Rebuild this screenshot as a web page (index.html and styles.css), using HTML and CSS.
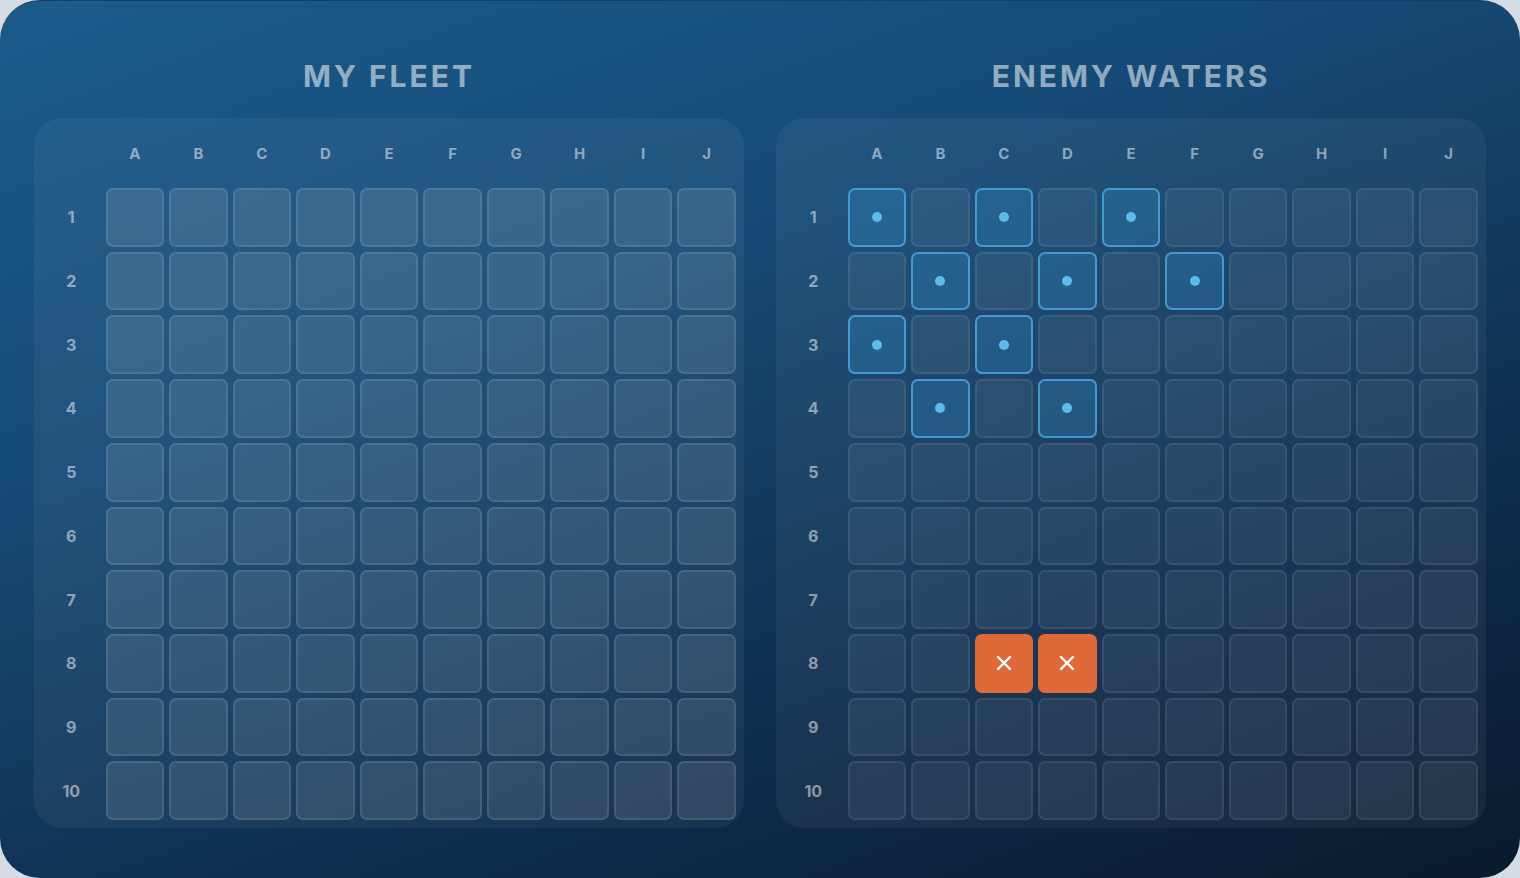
FILE: index.html
```html
<!DOCTYPE html>
<html lang="en">
<head>
    <meta charset="UTF-8">
    <meta name="viewport" content="width=device-width, initial-scale=1.0">
    <title>Battleship</title>
    <link rel="stylesheet" href="styles.css">
</head>
<body>
    <div class="game">
        <div class="side">
            <h2 class="side-title">MY FLEET</h2>
            <div class="board board-own" id="ownBoard"></div>
        </div>
        <div class="side">
            <h2 class="side-title">ENEMY WATERS</h2>
            <div class="board board-enemy" id="enemyBoard"></div>
        </div>
    </div>

    <script>
        const letters = ['A', 'B', 'C', 'D', 'E', 'F', 'G', 'H', 'I', 'J'];

        // Shots already fired at the enemy
        const misses = ['A1', 'C1', 'E1', 'B2', 'D2', 'F2', 'A3', 'C3', 'B4', 'D4'];
        const hits = ['C8', 'D8'];

        const crossIcon = '<svg width="18" height="18" viewBox="0 0 18 18"><path d="M3 3 L15 15 M15 3 L3 15" stroke="#fff" stroke-width="2.4" stroke-linecap="round"/></svg>';

        function buildBoard(board, isEnemy) {
            board.appendChild(makeLabel('', 'col-label'));
            letters.forEach(l => board.appendChild(makeLabel(l, 'col-label')));

            for (let row = 1; row <= 10; row++) {
                board.appendChild(makeLabel(row, 'row-label'));
                letters.forEach(l => {
                    const cell = document.createElement('div');
                    cell.className = 'cell';
                    const key = l + row;

                    if (isEnemy && misses.includes(key)) {
                        cell.classList.add('miss');
                        cell.innerHTML = '<span class="dot"></span>';
                    } else if (isEnemy && hits.includes(key)) {
                        cell.classList.add('hit');
                        cell.innerHTML = crossIcon;
                    }
                    board.appendChild(cell);
                });
            }
        }

        function makeLabel(text, type) {
            const label = document.createElement('div');
            label.className = 'label ' + type;
            label.textContent = text;
            return label;
        }

        buildBoard(document.getElementById('ownBoard'), false);
        buildBoard(document.getElementById('enemyBoard'), true);
    </script>
</body>
</html>
```

FILE: styles.css
```css
* {
    margin: 0;
    padding: 0;
    box-sizing: border-box;
}

body {
    font-family: 'Inter', 'Liberation Sans', sans-serif;
    background: #d6dce4;
    width: 1520px;
    height: 878px;
    overflow: hidden;
}

.game {
    width: 1520px;
    height: 878px;
    border-radius: 40px;
    background: linear-gradient(160deg, #1b5b8c 0%, #154a76 35%, #0f2d4d 70%, #0a1a2d 100%);
    border-top: 1px solid #173f63;
    display: flex;
    gap: 32px;
    padding: 55px 34px 0;
}

.side {
    display: flex;
    flex-direction: column;
    align-items: center;
}

.side-title {
    font-size: 30px;
    line-height: 40px;
    font-weight: 700;
    letter-spacing: 3px;
    color: rgba(255, 255, 255, 0.55);
    margin-bottom: 22px;
}

.board {
    width: 710px;
    height: 710px;
    padding: 8px;
    border-radius: 28px;
    background: rgba(255, 255, 255, 0.05);
    display: grid;
    grid-template-columns: repeat(11, 1fr);
    grid-template-rows: 57px repeat(10, 1fr);
    gap: 5px;
}

.label {
    display: flex;
    align-items: center;
    justify-content: center;
    font-weight: 700;
    color: rgba(255, 255, 255, 0.5);
}

.col-label {
    font-size: 15px;
    padding-bottom: 3px;
}

.row-label {
    font-size: 16px;
}

.cell {
    border-radius: 7px;
    border: 2px solid rgba(255, 255, 255, 0.1);
    background: rgba(255, 255, 255, 0.1);
    display: flex;
    align-items: center;
    justify-content: center;
}

.board-enemy .cell {
    background: rgba(160, 180, 200, 0.1);
    border-color: rgba(255, 255, 255, 0.08);
}

.board-enemy .cell.miss {
    background: rgba(60, 170, 230, 0.22);
    border-color: rgba(80, 180, 235, 0.7);
}

.dot {
    width: 10px;
    height: 10px;
    border-radius: 50%;
    background: #5bbbe9;
}

.board-enemy .cell.hit {
    background: #e0693a;
    border-color: #e0693a;
}
```
